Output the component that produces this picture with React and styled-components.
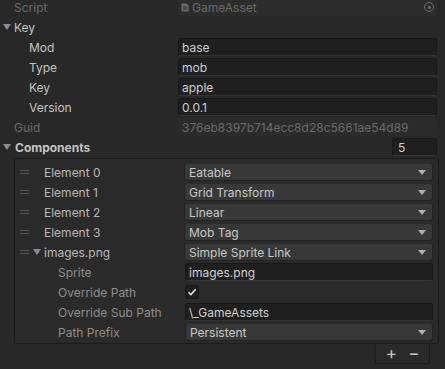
import React from 'react'
import styled, { createGlobalStyle } from 'styled-components'

const Global = createGlobalStyle`
  html, body {
    margin: 0;
    padding: 0;
    background: #282828;
    overflow: hidden;
  }
  body {
    font-family: Inter, "Noto Sans", sans-serif;
    font-size: 12px;
    color: #c4c4c4;
  }
`

const Inspector = styled.div`
  width: 445px;
  height: 369px;
  margin-top: -3px;
  display: flex;
  flex-direction: column;
`

const Row = styled.div`
  display: grid;
  grid-template-columns: ${p => p.$labelWidth || 178}px 1fr;
  align-items: center;
  height: 20px;
  padding-right: 8px;
`

const Label = styled.div`
  display: flex;
  align-items: center;
  padding-left: ${p => p.$indent || 0}px;
  color: ${p => (p.$disabled ? '#6a6a6a' : '#c4c4c4')};
  font-weight: ${p => (p.$bold ? 700 : 400)};
  white-space: nowrap;
`

const Fold = styled.span`
  display: inline-block;
  width: 0;
  height: 0;
  border-left: 4px solid transparent;
  border-right: 4px solid transparent;
  border-top: 6px solid #8a8a8a;
  margin-right: ${p => p.$gap || 3}px;
  margin-left: ${p => p.$left || 0}px;
`

const TextField = styled.div`
  height: 18px;
  box-sizing: border-box;
  display: flex;
  align-items: center;
  padding-left: 3px;
  background: ${p => (p.$disabled ? '#2b2b2b' : '#1f1f1f')};
  border: 1px solid ${p => (p.$disabled ? '#2b2b2b' : '#171717')};
  border-bottom-color: ${p => (p.$disabled ? '#2b2b2b' : '#353535')};
  border-radius: 3px;
  color: ${p => (p.$disabled ? '#6a6a6a' : '#d0d0d0')};
  white-space: nowrap;
  overflow: hidden;
`

const ObjectField = styled(TextField)`
  background: #2c2c2c;
  border-color: #2c2c2c;
  gap: 3px;
  padding-left: 2px;
  position: relative;
`

const Target = styled.span`
  position: absolute;
  right: 2px;
  top: 3px;
  width: 10px;
  height: 10px;
  box-sizing: border-box;
  border: 1.5px solid #6a6a6a;
  border-radius: 50%;
  display: flex;
  align-items: center;
  justify-content: center;
  &::after {
    content: '';
    width: 3px;
    height: 3px;
    border-radius: 50%;
    background: #6a6a6a;
  }
`

const CountField = styled(TextField)`
  justify-self: end;
  width: 45px;
  padding-left: 5px;
`

const ListBox = styled.div`
  margin: 1px 6px 0 14px;
  border: 1px solid #1c1c1c;
  border-radius: 3px;
  background: #2a2a2a;
  padding: 3px 5px 1px 0;
  display: flex;
  flex-direction: column;
`

const ListRow = styled.div`
  display: grid;
  grid-template-columns: 169px 1fr;
  align-items: center;
  height: 20px;
  padding-left: ${p => p.$fieldShift || 0}px;
`

const ItemLabel = styled.div`
  display: flex;
  align-items: center;
  padding-left: ${p => p.$indent || 0}px;
  color: ${p => (p.$dim ? '#8e8e8e' : '#b8b8b8')};
  white-space: nowrap;
`

const Handle = styled.span`
  width: 9px;
  height: 4px;
  box-sizing: border-box;
  border-top: 1px solid #555;
  border-bottom: 1px solid #555;
  margin-left: 5px;
  margin-right: ${p => p.$gap || 15}px;
`

const Dropdown = styled.div`
  height: 18px;
  box-sizing: border-box;
  display: flex;
  align-items: center;
  justify-content: space-between;
  padding: 0 6px 0 4px;
  background: #383838;
  border: 1px solid #222;
  border-top-color: #2c2c2c;
  border-radius: 3px;
  color: #c8c8c8;
  margin-left: ${p => p.$shift || 0}px;
  &::after {
    content: '';
    width: 0;
    height: 0;
    border-left: 4px solid transparent;
    border-right: 4px solid transparent;
    border-top: 5px solid #b0b0b0;
  }
`

const SubField = styled(TextField)`
  margin-left: 1px;
  padding-left: 3px;
`

const Check = styled.div`
  margin-left: 1px;
  width: 14px;
  height: 14px;
  box-sizing: border-box;
  border-radius: 2px;
  background: #1f1f1f;
  border: 1px solid #171717;
  display: flex;
  align-items: center;
  justify-content: center;
`

const Footer = styled.div`
  align-self: flex-end;
  margin-right: 15px;
  width: 55px;
  height: 20px;
  box-sizing: border-box;
  border: 1px solid #1c1c1c;
  border-top: none;
  border-radius: 0 0 3px 3px;
  background: #2a2a2a;
  display: flex;
  align-items: center;
  justify-content: space-around;
  padding: 0 4px;
  color: #c8c8c8;
  font-size: 17px;
  line-height: 1;
`

const ScriptIcon = () => (
  <svg width="8" height="9" viewBox="0 0 8 9">
    <path d="M0.5 0.5h5l2 2v6h-7z" fill="#6a6a6a" />
    <path d="M2 4h4M2 6h4" stroke="#2c2c2c" strokeWidth="1" />
  </svg>
)

const CheckMark = () => (
  <svg width="10" height="10" viewBox="0 0 10 10">
    <path d="M1.5 5.2l2.4 2.4 4.8-5.4" fill="none" stroke="#e0e0e0" strokeWidth="1.6" />
  </svg>
)

const elements = ['Eatable', 'Grid Transform', 'Linear', 'Mob Tag']

export default function App() {
  return (
    <>
      <Global />
      <Inspector>
        <Row>
          <Label $indent={14} $disabled>Script</Label>
          <ObjectField>
            <ScriptIcon />
            <span style={{ color: '#6a6a6a' }}>GameAsset</span>
            <Target />
          </ObjectField>
        </Row>
        <Row>
          <Label $indent={3}><Fold />Key</Label>
          <span />
        </Row>
        {[
          ['Mod', 'base'],
          ['Type', 'mob'],
          ['Key', 'apple'],
          ['Version', '0.0.1']
        ].map(([k, v]) => (
          <Row key={k}>
            <Label $indent={29}>{k}</Label>
            <TextField>{v}</TextField>
          </Row>
        ))}
        <Row>
          <Label $indent={14} $disabled>Guid</Label>
          <TextField $disabled>376eb8397b714ecc8d28c5661ae54d89</TextField>
        </Row>
        <Row>
          <Label $indent={3} $bold><Fold $gap={4} />Components</Label>
          <CountField>5</CountField>
        </Row>
        <ListBox>
          {elements.map((e, i) => (
            <ListRow key={e}>
              <ItemLabel><Handle />Element {i}</ItemLabel>
              <Dropdown>{e}</Dropdown>
            </ListRow>
          ))}
          <ListRow>
            <ItemLabel><Handle $gap={4} /><Fold $gap={3} />images.png</ItemLabel>
            <Dropdown>Simple Sprite Link</Dropdown>
          </ListRow>
          <ListRow>
            <ItemLabel $indent={43} $dim>Sprite</ItemLabel>
            <SubField>images.png</SubField>
          </ListRow>
          <ListRow>
            <ItemLabel $indent={43} $dim>Override Path</ItemLabel>
            <div><Check><CheckMark /></Check></div>
          </ListRow>
          <ListRow>
            <ItemLabel $indent={43} $dim>Override Sub Path</ItemLabel>
            <SubField>\_GameAssets</SubField>
          </ListRow>
          <ListRow>
            <ItemLabel $indent={43} $dim>Path Prefix</ItemLabel>
            <Dropdown $shift={1}>Persistent</Dropdown>
          </ListRow>
        </ListBox>
        <Footer>
          <span>+</span>
          <span>−</span>
        </Footer>
      </Inspector>
    </>
  )
}
